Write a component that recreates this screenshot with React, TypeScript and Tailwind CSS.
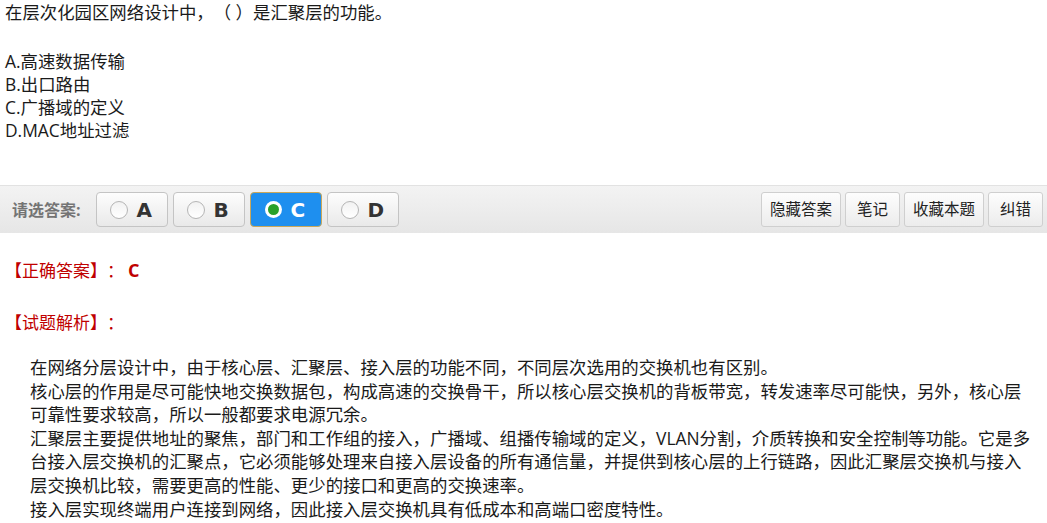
import React from 'react';

const FONT = { fontFamily: '"Open Sans", "Noto Sans CJK SC", sans-serif' };

const options = ['A.高速数据传输', 'B.出口路由', 'C.广播域的定义', 'D.MAC地址过滤'];

const analysis = [
  '在网络分层设计中，由于核心层、汇聚层、接入层的功能不同，不同层次选用的交换机也有区别。',
  '核心层的作用是尽可能快地交换数据包，构成高速的交换骨干，所以核心层交换机的背板带宽，转发速率尽可能快，另外，核心层可靠性要求较高，所以一般都要求电源冗余。',
  '汇聚层主要提供地址的聚焦，部门和工作组的接入，广播域、组播传输域的定义，VLAN分割，介质转换和安全控制等功能。它是多台接入层交换机的汇聚点，它必须能够处理来自接入层设备的所有通信量，并提供到核心层的上行链路，因此汇聚层交换机与接入层交换机比较，需要更高的性能、更少的接口和更高的交换速率。',
  '接入层实现终端用户连接到网络，因此接入层交换机具有低成本和高端口密度特性。',
];

const ChoiceButton: React.FC<{ letter: string; active?: boolean }> = ({ letter, active }) => (
  <button
    className={
      active
        ? 'flex items-center h-[35px] w-[72px] pl-[14px] gap-[9px] rounded-[4px] border border-[#c9a85a] bg-[#1e8fef]'
        : 'flex items-center h-[35px] w-[72px] pl-[13px] gap-[9px] rounded-[4px] border border-[#c4c4c4] bg-gradient-to-b from-[#fdfdfd] to-[#e9e9e9]'
    }
  >
    <span
      className={
        active
          ? 'flex items-center justify-center w-[17px] h-[17px] rounded-full bg-white'
          : 'w-[18px] h-[18px] rounded-full border border-[#b5b5b5] bg-gradient-to-b from-[#f2f2f2] to-white'
      }
    >
      {active && <span className="w-[11px] h-[11px] rounded-full bg-[#2aa12a]" />}
    </span>
    <span
      className={active ? 'text-[20px] font-bold text-white leading-none' : 'text-[20px] font-bold text-[#333] leading-none'}
      style={{ fontFamily: '"DejaVu Sans", sans-serif' }}
    >
      {letter}
    </span>
  </button>
);

const ToolButton: React.FC<{ label: string }> = ({ label }) => (
  <button className="h-[35px] min-w-[55px] px-[8px] rounded-[3px] border border-[#cfcfcf] bg-gradient-to-b from-[#fdfdfd] to-[#ececec] text-[15.5px] text-[#222]">
    {label}
  </button>
);

export default function App() {
  return (
    <div
      className="w-[1047px] h-[523px] bg-white overflow-hidden text-[#1a1a1a] [text-spacing-trim:space-all]"
      style={FONT}
    >
      <div className="pl-[5px] text-[17.4px] leading-[23px]">
        <p className="pt-[1px]">在层次化园区网络设计中，（ ）是汇聚层的功能。</p>
        <div className="mt-[26px]">
          {options.map((o) => (
            <p key={o}>{o}</p>
          ))}
        </div>
      </div>

      <div className="mt-[43px] h-[48px] flex items-center justify-between pl-[12px] pr-[4px] bg-gradient-to-b from-[#f3f3f3] to-[#e6e6e6] border-t border-[#e2e2e2]">
        <div className="flex items-center">
          <span className="text-[16px] font-bold text-[#747474] mr-[15px]">请选答案:</span>
          <div className="flex gap-[5px]">
            <ChoiceButton letter="A" />
            <ChoiceButton letter="B" />
            <ChoiceButton letter="C" active />
            <ChoiceButton letter="D" />
          </div>
        </div>
        <div className="flex gap-[4px]">
          <ToolButton label="隐藏答案" />
          <ToolButton label="笔记" />
          <ToolButton label="收藏本题" />
          <ToolButton label="纠错" />
        </div>
      </div>

      <div className="pl-[5px] text-[#c00000] text-[17px] leading-[23px]">
        <p className="mt-[26px] flex items-center">
          【正确答案】：<span className="ml-[4px] text-[18px] font-bold">C</span>
        </p>
        <p className="mt-[29px]">【试题解析】：</p>
      </div>

      <div className="mt-[22px] pl-[30px] pr-[12px] text-[17.4px] leading-[23.6px] text-[#1a1a1a]">
        {analysis.map((t, i) => (
          <p key={i}>{t}</p>
        ))}
      </div>
    </div>
  );
}
